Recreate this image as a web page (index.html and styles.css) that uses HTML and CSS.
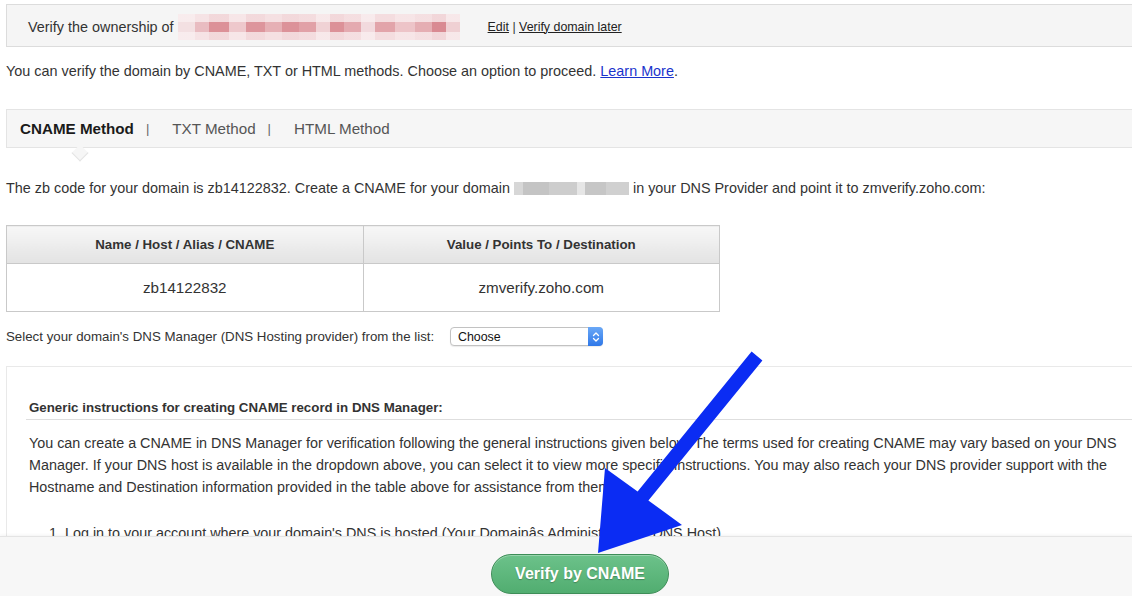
FILE: index.html
```html
<!DOCTYPE html>
<html lang="en">
<head>
<meta charset="utf-8">
<title>Verify domain</title>
<link rel="stylesheet" href="styles.css">
</head>
<body>
<div class="page">
  <div class="verify-bar">
    <span class="verify-label">Verify the ownership of</span>
    <span class="blur-pink"></span>
    <span class="verify-links"><a href="#">Edit</a> | <a href="#">Verify domain later</a></span>
  </div>

  <p class="intro">You can verify the domain by CNAME, TXT or HTML methods. Choose an option to proceed. <a href="#" class="learn">Learn More</a>.</p>

  <div class="tabs">
    <span class="tab active">CNAME Method</span>
    <span class="sep">|</span>
    <span class="tab">TXT Method</span>
    <span class="sep">|</span>
    <span class="tab">HTML Method</span>
  </div>

  <p class="zb">The zb code for your domain is zb14122832. Create a CNAME for your domain <span class="blur-gray"></span> in your DNS Provider and point it to zmverify.zoho.com:</p>

  <table class="records">
    <thead>
      <tr><th>Name / Host / Alias / CNAME</th><th>Value / Points To / Destination</th></tr>
    </thead>
    <tbody>
      <tr><td>zb14122832</td><td>zmverify.zoho.com</td></tr>
    </tbody>
  </table>

  <div class="select-row">
    <span class="select-label">Select your domain's DNS Manager (DNS Hosting provider) from the list:</span>
    <span class="select">
      <span class="select-text">Choose</span>
      <span class="select-btn">
        <svg width="8" height="12" viewBox="0 0 8 12"><path d="M1.5 4.5 L4 2 L6.5 4.5 M1.5 7.5 L4 10 L6.5 7.5" fill="none" stroke="#fff" stroke-width="1.3" stroke-linecap="round" stroke-linejoin="round"/></svg>
      </span>
    </span>
  </div>

  <div class="instructions">
    <h3 class="inst-title">Generic instructions for creating CNAME record in DNS Manager:</h3>
    <p class="inst-text">You can create a CNAME in DNS Manager for verification following the general instructions given below. The terms used for creating CNAME may vary based on your DNS Manager. If your DNS host is available in the dropdown above, you can select it to view more specific instructions. You may also reach your DNS provider support with the Hostname and Destination information provided in the table above for assistance from them.</p>
    <ol class="inst-list">
      <li>Log in to your account where your domain's DNS is hosted (Your Domainâs Administrator or DNS Host).</li>
    </ol>
  </div>
</div>

<div class="footer">
  <button class="verify-btn">Verify by CNAME</button>
</div>

<svg class="arrow" width="1132" height="596" viewBox="0 0 1132 596">
  <polygon points="751.6,351.6 762.4,360.4 648.4,500.4 682,525 598,553 605,468 637.6,491.6" fill="#0b2cf3"/>
</svg>
</body>
</html>
```

FILE: styles.css
```css
html, body {
  margin: 0;
  padding: 0;
  overflow: hidden;
  background: #fff;
}
body {
  font-family: "Liberation Sans", Arial, Helvetica, sans-serif;
  color: #333;
  width: 1132px;
  height: 596px;
  position: relative;
}
.page {
  width: 1150px;
  padding: 4px 0 0 6px;
}
.verify-bar {
  height: 39px;
  padding-top: 2px;
  border: 1px solid #dcdcdc;
  background: #f5f5f5;
  display: flex;
  align-items: center;
  padding-left: 21px;
  font-size: 14.4px;
  color: #333;
}
.blur-pink {
  display: inline-block;
  width: 282px;
  height: 26px;
  margin-left: 4px;
  background:
    linear-gradient(to bottom, rgba(250,240,241,0.75) 0 30%, rgba(250,240,241,0) 30% 70%, rgba(250,240,241,0.75) 70%),
    linear-gradient(to right,
      #f3e0e2 0 6%, #e9bcc1 6% 11%, #dc9198 11% 18%, #eec8cc 18% 24%, #dd959c 24% 31%,
      #e6b0b5 31% 37%, #dc9299 37% 43%, #e1a1a7 43% 49%, #f0d2d5 49% 54%, #dc9198 54% 59%,
      #e4aab0 59% 65%, #f2dade 65% 70%, #e2a4aa 70% 77%, #edc4c8 77% 84%, #e5aeb3 84% 90%,
      #d98a92 90% 95%, #efd0d3 95% 100%);
}
.verify-links {
  margin-left: 28px;
  font-size: 12.4px;
}
.verify-links a {
  color: #222;
  text-decoration: underline;
}
.intro {
  margin: 15px 0 0 0;
  font-size: 14.4px;
  line-height: 18px;
}
.learn {
  color: #1a33cc;
}
.tabs {
  margin-top: 29px;
  height: 37px;
  border: 1px solid #e4e4e4;
  background: #f6f6f6;
  display: flex;
  align-items: center;
  padding-left: 13px;
  font-size: 15.2px;
  color: #555;
}
.tab {
  position: relative;
}
.tab.active {
  font-weight: bold;
  color: #1a1a1a;
}
.tab.active::after {
  content: "";
  position: absolute;
  left: 54px;
  top: 27px;
  width: 11px;
  height: 11px;
  background: #f6f6f6;
  border-right: 1px solid #e4e4e4;
  border-bottom: 1px solid #e4e4e4;
  transform: rotate(45deg);
}
.sep {
  margin: 0 23px 0 12px;
  font-size: 13px;
  color: #666;
}
.zb {
  margin: 31px 0 0 0;
  font-size: 14.4px;
  line-height: 18px;
}
.blur-gray {
  display: inline-block;
  width: 115px;
  height: 13px;
  vertical-align: -2px;
  background: linear-gradient(to right, #d7d7d7 0 8%, #c4c4c4 8% 30%, #cdcdcd 30% 55%, #e6e6e6 55% 62%, #c6c6c6 62% 80%, #d0d0d0 80% 100%);
}
.records {
  margin-top: 28px;
  width: 714px;
  border-collapse: collapse;
  font-size: 15.2px;
}
.records th {
  height: 37px;
  border: 1px solid #c9c9c9;
  background: linear-gradient(to bottom, #f7f7f7, #e3e3e3);
  font-size: 13.3px;
  font-weight: bold;
  color: #333;
  width: 50%;
  padding: 0;
}
.records th:first-child {
  width: 356px;
}
.records td {
  height: 47px;
  border: 1px solid #c9c9c9;
  text-align: center;
  padding: 0;
}
.select-row {
  margin-top: 15px;
  display: flex;
  align-items: center;
  font-size: 13.3px;
}
.select-label {
  width: 444px;
}
.select {
  width: 151px;
  height: 17px;
  border: 1px solid #c2c2c2;
  border-radius: 4px;
  background: #fff;
  display: flex;
  align-items: center;
  justify-content: space-between;
  box-shadow: 0 1px 1px rgba(0,0,0,0.08);
  font-size: 12.4px;
}
.select-text {
  padding-left: 7px;
  color: #111;
}
.select-btn {
  width: 15px;
  height: 19px;
  margin: -1px -1px -1px 0;
  background: linear-gradient(to bottom, #6aa8f7, #2f78e8);
  border-radius: 0 4px 4px 0;
  display: flex;
  align-items: center;
  justify-content: center;
}
.instructions {
  margin-top: 20px;
  border: 1px solid #e9e9e9;
  border-right: none;
  padding: 33px 0 0 0;
  height: 220px;
}
.inst-title {
  margin: 0 0 0 19px;
  padding: 0 0 3px 3px;
  font-size: 13.3px;
  line-height: 16px;
  font-weight: bold;
  color: #333;
  border-bottom: 1px solid #dedede;
}
.inst-text {
  margin: 12px 0 0 22px;
  width: 1100px;
  font-size: 14.35px;
  line-height: 22px;
  color: #333;
}
.inst-list {
  margin: 24px 0 0 0;
  padding-left: 58px;
  font-size: 14.35px;
  line-height: 22px;
}
.footer {
  position: absolute;
  left: 0;
  bottom: 0;
  width: 1132px;
  height: 58px;
  background: #f7f7f7;
  border-top: 1px solid #e4e4e4;
  box-shadow: 0 -1px 3px rgba(0,0,0,0.05);
  display: flex;
  justify-content: center;
  align-items: flex-end;
  padding-bottom: 1px;
}
.verify-btn {
  margin-left: 28px;
  margin-bottom: 1px;
  width: 178px;
  height: 40px;
  border-radius: 20px;
  border: 1px solid #3d8d57;
  background: linear-gradient(to bottom, #6cc28a, #51ad70);
  color: #fff;
  font-family: "Liberation Sans", Arial, Helvetica, sans-serif;
  font-weight: bold;
  font-size: 16px;
  text-shadow: 0 1px 1px rgba(0,0,0,0.25);
  box-shadow: inset 0 1px 0 rgba(255,255,255,0.3);
  cursor: pointer;
}
.arrow {
  position: absolute;
  left: 0;
  top: 0;
  pointer-events: none;
}
```
